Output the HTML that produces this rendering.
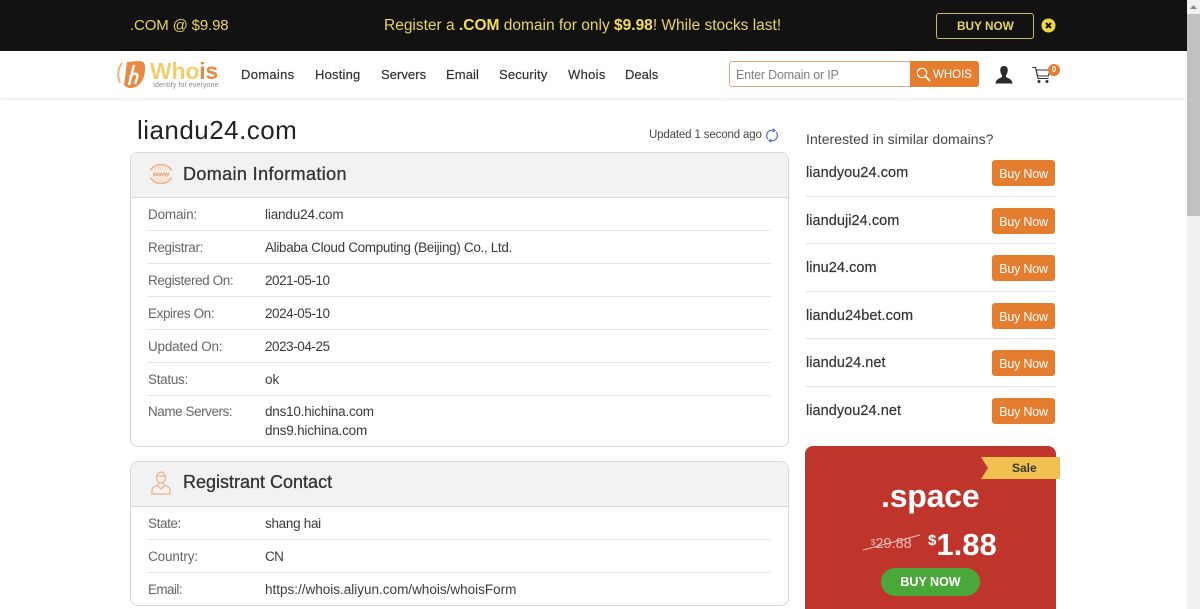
<!DOCTYPE html>
<html><head><meta charset="utf-8"><title>liandu24.com</title>
<style>
html,body{margin:0;padding:0;width:1200px;height:609px;overflow:hidden;background:#fff;font-family:"Liberation Sans",sans-serif;color:#333}
.t{position:absolute;white-space:nowrap;line-height:20px}
.b{position:absolute}
.l{font-size:13.5px;color:#666;left:148px}
.v{font-size:13.5px;color:#3a3a3a;left:265px}
.hr{position:absolute;left:148px;width:623px;height:1px;background:#e4e4e4}
.card{position:absolute;left:130px;width:657px;border:1px solid #d8d8d8;border-radius:8px;box-sizing:content-box;background:#fff}
.ch{position:absolute;left:0;top:0;right:0;height:44px;background:#f2f2f2;border-bottom:1px solid #d8d8d8;border-radius:8px 8px 0 0}
.ct{font-size:18px;color:#333;left:183px;-webkit-text-stroke:.3px #333}
.d{font-size:14.5px;color:#333;left:806px;letter-spacing:.05px;-webkit-text-stroke:.2px #333}
.bn{position:absolute;left:992px;width:63px;height:26px;background:#e57d2f;border-radius:3px;color:#fff;font-size:12.5px;line-height:28px;text-align:center;letter-spacing:-.2px}
.sep{position:absolute;left:806px;width:250px;height:1px;background:#e2e2e2}
.nav{font-size:13px;color:#333;letter-spacing:.3px;top:65px;-webkit-text-stroke:.2px #333}
</style></head><body>
<div class="b" style="left:0;top:0;width:1187px;height:51px;background:#121212"></div>
<span class="t" style="left:130px;top:16px;font-size:15px;color:#e7d366;letter-spacing:-.15px">.COM @ $9.98</span>
<span class="t" style="left:384px;top:16px;font-size:15.5px;color:#e7d366;letter-spacing:0">Register a <b style="color:#f5dc5c">.COM</b> domain for only <b style="color:#f5dc5c">$9.98</b>! While stocks last!</span>
<div class="b" style="left:936px;top:13px;width:96px;height:24px;border:1px solid #cdbb5c;border-radius:3px"></div>
<span class="t" style="left:957px;top:16px;font-size:11.8px;font-weight:bold;color:#e7d366">BUY NOW</span>
<svg class="b" style="left:1041px;top:18px" width="15" height="15" viewBox="0 0 15 15"><circle cx="7.5" cy="7.5" r="7" fill="#f0d845"/><path d="M5 5l5 5M10 5l-5 5" stroke="#121212" stroke-width="2"/></svg>

<div class="b" style="left:0;top:51px;width:1187px;height:47px;background:#fff;box-shadow:0 1px 3px rgba(0,0,0,.1)"></div>
<svg class="b" style="left:117px;top:60px" width="30" height="29" viewBox="0 0 30 29"><path d="M5 3C1 8 0 15 3 23" stroke="#e9b48c" stroke-width="2" fill="none"/><path d="M10 2L22 1C27 1 28 4 28 8C28 18 24 27 14 28C11 28 9 27 7 25Z" fill="#e88a42"/><path d="M17 5L12 25M13 17C17 12 22 13 20 18L18 24" stroke="#fff" stroke-width="2.4" fill="none"/></svg>
<span class="t" style="left:150px;top:61px;font-size:23px;font-weight:bold;color:#f0cf6a;letter-spacing:-.2px">Who<span style="color:#e8873e">is</span></span>
<span class="t" style="left:153px;top:76px;font-size:7px;color:#888;letter-spacing:.1px">Identify for everyone</span>
<span class="t nav" style="left:241px">Domains</span>
<span class="t nav" style="left:315px;letter-spacing:.2px">Hosting</span>
<span class="t nav" style="left:381px;letter-spacing:.05px">Servers</span>
<span class="t nav" style="left:446px;letter-spacing:.1px">Email</span>
<span class="t nav" style="left:499px;letter-spacing:.2px">Security</span>
<span class="t nav" style="left:568px">Whois</span>
<span class="t nav" style="left:625px;letter-spacing:0">Deals</span>

<div class="b" style="left:729px;top:61px;width:182px;height:24px;border:1px solid #e2a77c;border-right:0;border-radius:3px 0 0 3px"></div>
<span class="t" style="left:736px;top:65px;font-size:12.5px;color:#808080;letter-spacing:-.2px">Enter Domain or IP</span>
<div class="b" style="left:910px;top:61px;width:69px;height:26px;background:#e57d2f;border-radius:0 3px 3px 0"></div>
<svg class="b" style="left:916px;top:67px" width="15" height="15" viewBox="0 0 15 15"><circle cx="6" cy="6" r="4.7" fill="none" stroke="#fff" stroke-width="1.2"/><path d="M9.5 9.5L14 14" stroke="#fff" stroke-width="1.8"/></svg>
<span class="t" style="left:933px;top:65px;font-size:11.5px;color:#fff">WHOIS</span>
<svg class="b" style="left:995px;top:66px" width="18" height="18" viewBox="0 0 18 18"><path d="M9 0C5.800 0 5 2.500 5.300 5C5.500 7 6.300 8.500 7 9.500V11C5 12.500 1 12.500.5 17.500H17.500C17 12.500 13 12.500 11 11V9.500C11.700 8.500 12.500 7 12.700 5C13 2.500 12.200 0 9 0Z" fill="#2b2b2b"/></svg>
<svg class="b" style="left:1032px;top:66px" width="20" height="18" viewBox="0 0 20 18"><path d="M.5 1.500H3.500L6 12.500H16.500" fill="none" stroke="#333" stroke-width="1.100"/><path d="M4.200 4H18L16.500 10H5.500Z" fill="none" stroke="#333" stroke-width="1.100"/><circle cx="7" cy="15.500" r="1.500" fill="#333"/><circle cx="15" cy="15.500" r="1.500" fill="#333"/></svg>
<div class="b" style="left:1048px;top:64px;width:12px;height:12px;border-radius:50%;background:#e57d2f;color:#fff;font-size:8px;font-weight:bold;line-height:12px;text-align:center">0</div>

<span class="t" style="left:137px;top:116px;font-size:26px;line-height:28px;color:#222;letter-spacing:.47px">liandu24.com</span>
<span class="t" style="left:649px;top:125px;font-size:11.5px;color:#444;letter-spacing:-.15px">Updated 1 second ago</span>
<svg class="b" style="left:765px;top:128px" width="14" height="15" viewBox="0 0 14 15"><path d="M3 11C.8 8.500 1.200 4.500 4.500 2.800C6 2 7.500 2.200 8.500 2.500M11 4C13.200 6.500 12.800 10.500 9.500 12.200C8 13 6.500 12.800 5.500 12.500" fill="none" stroke="#5577c4" stroke-width="1.300"/><path d="M8 0L11 2.800L7.500 4.500ZM6 15L3 12.200L6.500 10.500Z" fill="#5577c4"/></svg>

<div class="card" style="top:152px;height:293px"><div class="ch"></div></div>
<svg class="b" style="left:148px;top:163px" width="26" height="22" viewBox="0 0 26 22"><ellipse cx="13" cy="11" rx="11.500" ry="9.500" fill="#f8e3d3" stroke="#edb48c" stroke-width="1.500"/><rect x="1" y="7.500" width="24" height="7" fill="#f2f2f2"/><text x="13" y="13.400" font-size="7" font-weight="bold" fill="#e59a66" text-anchor="middle" font-family="Liberation Sans">www</text></svg>
<span class="t ct" style="top:164px;letter-spacing:.38px">Domain Information</span>
<span class="t l" style="top:205px;letter-spacing:-.18px">Domain:</span><span class="t v" style="top:205px;letter-spacing:-.15px">liandu24.com</span><div class="hr" style="top:230px"></div>
<span class="t l" style="top:238px;letter-spacing:-.35px">Registrar:</span><span class="t v" style="top:238px;letter-spacing:-.33px">Alibaba Cloud Computing (Beijing) Co., Ltd.</span><div class="hr" style="top:263px"></div>
<span class="t l" style="top:271px;letter-spacing:-.4px">Registered On:</span><span class="t v" style="top:271px;letter-spacing:-.45px">2021-05-10</span><div class="hr" style="top:296px"></div>
<span class="t l" style="top:304px;letter-spacing:-.4px">Expires On:</span><span class="t v" style="top:304px;letter-spacing:-.45px">2024-05-10</span><div class="hr" style="top:329px"></div>
<span class="t l" style="top:337px;letter-spacing:-.2px">Updated On:</span><span class="t v" style="top:337px;letter-spacing:-.45px">2023-04-25</span><div class="hr" style="top:362px"></div>
<span class="t l" style="top:370px;letter-spacing:-.3px">Status:</span><span class="t v" style="top:370px">ok</span><div class="hr" style="top:395px"></div>
<span class="t l" style="top:402px;letter-spacing:-.45px">Name Servers:</span><span class="t v" style="top:402px;letter-spacing:-.22px">dns10.hichina.com</span>
<span class="t v" style="top:421px;letter-spacing:-.19px">dns9.hichina.com</span>

<div class="card" style="top:461px;height:143px"><div class="ch"></div></div>
<svg class="b" style="left:151px;top:471px" width="20" height="24" viewBox="0 0 20 24"><g fill="none" stroke="#edb48c" stroke-width="1.300"><ellipse cx="10" cy="6.500" rx="4.500" ry="5.500"/><path d="M5.500 5H14.500"/><path d="M7.500 12L6.500 14.500C3 15.500 1 16.500 1 19V23H19V19C19 16.500 17 15.500 13.500 14.500L12.500 12"/><path d="M6.500 14.500L10 18L13.500 14.500"/></g></svg>
<span class="t ct" style="top:472px;letter-spacing:0">Registrant Contact</span>
<span class="t l" style="top:514px;letter-spacing:-.4px">State:</span><span class="t v" style="top:514px;letter-spacing:-.3px">shang hai</span><div class="hr" style="top:539px"></div>
<span class="t l" style="top:547px;letter-spacing:-.12px">Country:</span><span class="t v" style="top:547px;letter-spacing:-.6px">CN</span><div class="hr" style="top:572px"></div>
<span class="t l" style="top:580px;letter-spacing:-.6px">Email:</span><span class="t v" style="top:580px;letter-spacing:0">https://whois.aliyun.com/whois/whoisForm</span>

<span class="t" style="left:806px;top:129px;font-size:14px;color:#444;letter-spacing:.05px">Interested in similar domains?</span>
<span class="t d" style="top:163px">liandyou24.com</span><div class="bn" style="top:160px">Buy Now</div><div class="sep" style="top:196px"></div>
<span class="t d" style="top:211px">lianduji24.com</span><div class="bn" style="top:208px">Buy Now</div><div class="sep" style="top:243px"></div>
<span class="t d" style="top:258px">linu24.com</span><div class="bn" style="top:255px">Buy Now</div><div class="sep" style="top:291px"></div>
<span class="t d" style="top:306px">liandu24bet.com</span><div class="bn" style="top:303px">Buy Now</div><div class="sep" style="top:338px"></div>
<span class="t d" style="top:353px">liandu24.net</span><div class="bn" style="top:350px">Buy Now</div><div class="sep" style="top:386px"></div>
<span class="t d" style="top:401px">liandyou24.net</span><div class="bn" style="top:398px">Buy Now</div>

<div class="b" style="left:805px;top:446px;width:251px;height:163px;background:#c0352b;border-radius:8px 8px 0 0"></div>
<svg class="b" style="left:981px;top:457px" width="79" height="23" viewBox="0 0 79 23"><path d="M0 0H79V22H0L7 11Z" fill="#f0c050"/></svg>
<span class="t" style="left:1012px;top:458px;font-size:12px;font-weight:bold;color:#3a3a2a">Sale</span>
<span class="t" style="left:881px;top:478px;font-size:32px;line-height:36px;font-weight:bold;color:#fff;letter-spacing:-.2px">.space</span>
<span class="t" style="left:871px;top:533px;font-size:14.500px;color:#f0b9b3"><span style="font-size:8px;vertical-align:3px">$</span>29.88</span>
<svg class="b" style="left:863px;top:534px" width="58" height="18" viewBox="0 0 58 18"><path d="M0 16L57 1" stroke="#f0c4be" stroke-width="1"/></svg>
<span class="t" style="left:928px;top:524px;font-size:31px;line-height:34px;font-weight:bold;color:#fff"><span style="font-size:15px;vertical-align:10px">$</span>1.88</span>
<div class="b" style="left:881px;top:568px;width:99px;height:28px;border-radius:14px;background:#4aa83a;color:#fff;font-size:12.500px;font-weight:bold;line-height:28px;text-align:center">BUY NOW</div>

<div class="b" style="left:1187px;top:0;width:13px;height:609px;background:#f1f1f1"></div>
<div class="b" style="left:1187px;top:14px;width:13px;height:202px;background:#c1c1c1"></div>
<svg class="b" style="left:1189px;top:4px" width="9" height="6" viewBox="0 0 9 6"><path d="M4.500 1L8 5H1Z" fill="#8a8a8a"/></svg>
</body></html>
